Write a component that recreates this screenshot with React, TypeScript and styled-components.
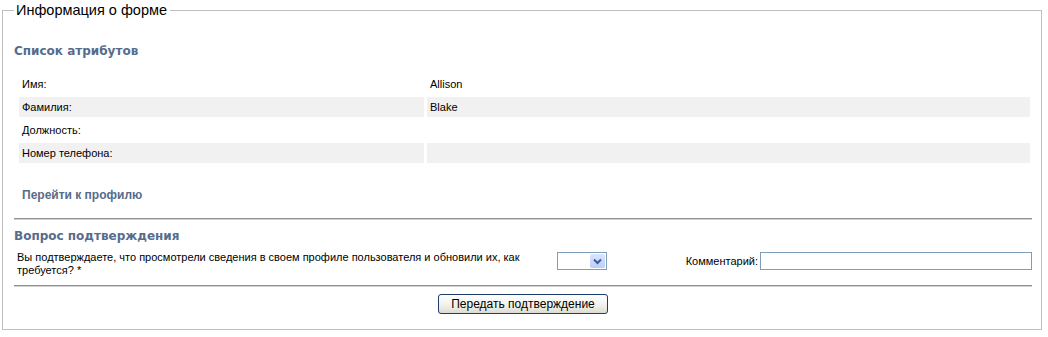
import * as React from 'react';
import styled, {createGlobalStyle} from 'styled-components';

const GlobalStyle = createGlobalStyle`
  body {
    margin: 0;
    background: #ffffff;
    font-family: "Liberation Sans", Arial, sans-serif;
    font-size: 11px;
    color: #000000;
  }
`;

const FormFieldset = styled.fieldset`
  margin: 2px 6px 0 2px;
  padding: 0 8px 15px 11px;
  border: 1px solid #c0c0c0;
  min-width: 0;
`;

const FormLegend = styled.legend`
  margin-left: 0;
  padding: 0 3px 0 2px;
  font-size: 14.5px;
  line-height: 17px;
  color: #000000;
`;

const SectionTitle = styled.div<{spaced?: boolean}>`
  margin-top: ${(p) => (p.spaced ? '25px' : '9px')};
  font-family: "DejaVu Sans", Verdana, sans-serif;
  font-weight: bold;
  font-size: 12px;
  line-height: 15px;
  color: #566c8c;
`;

const AttrTable = styled.table`
  width: calc(100% - 2px);
  margin-top: 12px;
  margin-left: 2px;
  border-collapse: separate;
  border-spacing: 3px;
`;

const AttrCell = styled.td<{label?: boolean; shaded?: boolean}>`
  height: 20px;
  padding: 0 0 0 3px;
  width: ${(p) => (p.label ? '402px' : 'auto')};
  background: ${(p) => (p.shaded ? '#f1f1f1' : 'transparent')};
  vertical-align: middle;
  line-height: 13px;
`;

const ProfileLink = styled.a`
  display: block;
  margin: 22px 0 0 8px;
  font-weight: bold;
  font-size: 12px;
  line-height: 15px;
  color: #566c8c;
  text-decoration: none;
`;

const Divider = styled.hr<{gap: number}>`
  margin: ${(p) => p.gap}px 0 0;
  border: 0;
  border-top: 1px solid #929292;
  border-bottom: 1px solid #cfcfcf;
  width: 1018px;
`;

const QuestionRow = styled.div`
  display: flex;
  align-items: flex-start;
  margin-top: 7px;
  width: 1018px;
`;

const QuestionText = styled.div`
  width: 540px;
  padding-left: 3px;
  line-height: 13px;
`;

const SelectBox = styled.div`
  position: relative;
  width: 48px;
  height: 16px;
  margin-top: 1px;
  border: 1px solid #7f9db9;
  background: #ffffff;
`;

const SelectArrow = styled.span`
  position: absolute;
  right: 1px;
  top: 1px;
  width: 15px;
  height: 14px;
  display: flex;
  align-items: center;
  justify-content: center;
  border-radius: 2px;
  background: linear-gradient(#dbe6fd, #b9cdf8);
`;

const CommentCell = styled.div`
  flex: 1;
  display: flex;
  justify-content: flex-end;
  align-items: center;
  gap: 2px;
  margin-top: 1px;
`;

const CommentInput = styled.input`
  box-sizing: border-box;
  width: 272px;
  height: 18px;
  border: 1px solid #7f9db9;
  padding: 0 2px;
  font: inherit;
`;

const ButtonRow = styled.div`
  display: flex;
  justify-content: center;
  width: 1018px;
  margin-top: 7px;
`;

const SubmitButton = styled.button`
  box-sizing: border-box;
  width: 170px;
  height: 20px;
  padding: 0;
  border: 1px solid #1c3d6e;
  border-radius: 3px;
  background: linear-gradient(#ffffff, #f0f0ea 60%, #dcdcd4);
  font-family: "Liberation Sans", Arial, sans-serif;
  font-size: 12px;
  color: #000000;
`;

const attributes = [
  {label: 'Имя:', value: 'Allison'},
  {label: 'Фамилия:', value: 'Blake'},
  {label: 'Должность:', value: ''},
  {label: 'Номер телефона:', value: ''},
];

const App = () => {
  return (
    <>
      <GlobalStyle/>
      <FormFieldset>
        <FormLegend>Информация о форме</FormLegend>
        <SectionTitle spaced>Список атрибутов</SectionTitle>
        <AttrTable>
          <tbody>
            {attributes.map((attr, i) => (
              <tr key={attr.label}>
                <AttrCell label shaded={i % 2 === 1}>{attr.label}</AttrCell>
                <AttrCell shaded={i % 2 === 1}>{attr.value}</AttrCell>
              </tr>
            ))}
          </tbody>
        </AttrTable>
        <ProfileLink href='#'>Перейти к профилю</ProfileLink>
        <Divider gap={15}/>
        <SectionTitle>Вопрос подтверждения</SectionTitle>
        <QuestionRow>
          <QuestionText>
            Вы подтверждаете, что просмотрели сведения в своем профиле пользователя и обновили их, как требуется? *
          </QuestionText>
          <SelectBox>
            <SelectArrow>
              <svg width='9' height='7' viewBox='0 0 9 7'>
                <path d='M1 1.5 L4.5 5 L8 1.5' fill='none' stroke='#3a5a9c' strokeWidth='2'/>
              </svg>
            </SelectArrow>
          </SelectBox>
          <CommentCell>
            <span>Комментарий:</span>
            <CommentInput type='text'/>
          </CommentCell>
        </QuestionRow>
        <Divider gap={8}/>
        <ButtonRow>
          <SubmitButton type='button'>Передать подтверждение</SubmitButton>
        </ButtonRow>
      </FormFieldset>
    </>
  );
};

export default App;
